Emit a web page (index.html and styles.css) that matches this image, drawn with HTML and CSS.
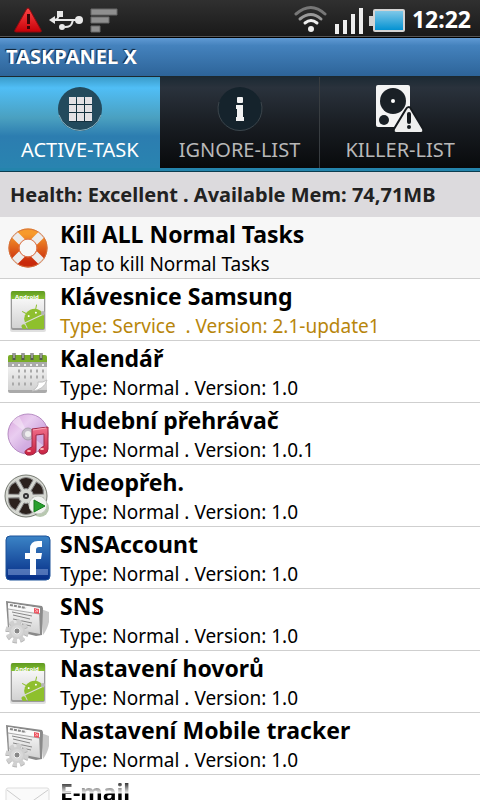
FILE: index.html
```html
<!DOCTYPE html>
<html lang="en">
<head>
    <meta charset="UTF-8">
    <meta name="viewport" content="width=device-width, initial-scale=1.0">
    <title>TaskPanel X</title>
    <link rel="stylesheet" href="styles.css">
</head>
<body>
    <!-- Shared icons -->
    <svg class="sprite" aria-hidden="true">
        <defs>
            <linearGradient id="g-orange" x1="0" y1="0" x2="0" y2="1"><stop offset="0" stop-color="#f79a2c"/><stop offset="1" stop-color="#c92a0c"/></linearGradient>
            <linearGradient id="g-paper" x1="0" y1="0" x2="0" y2="1"><stop offset="0" stop-color="#ffffff"/><stop offset="1" stop-color="#d2d2d2"/></linearGradient>
            <linearGradient id="g-green" x1="0" y1="0" x2="0" y2="1"><stop offset="0" stop-color="#5f9a20"/><stop offset="1" stop-color="#86bf34"/></linearGradient>
            <linearGradient id="g-disc" x1="0" y1="0" x2="1" y2="1"><stop offset="0" stop-color="#d9a3dc"/><stop offset=".35" stop-color="#e9cdf0"/><stop offset=".6" stop-color="#d3aee2"/><stop offset="1" stop-color="#c79bd4"/></linearGradient>
            <linearGradient id="g-note" x1="0" y1="0" x2="0" y2="1"><stop offset="0" stop-color="#f0708c"/><stop offset="1" stop-color="#c8203f"/></linearGradient>
            <linearGradient id="g-fb" x1="0" y1="0" x2="0" y2="1"><stop offset="0" stop-color="#3b84c6"/><stop offset="1" stop-color="#052c86"/></linearGradient>
            <clipPath id="page-clip"><path d="M8 6h32v37H8z"/></clipPath>
        </defs>
        <symbol id="icon-android" viewBox="0 0 48 48">
            <rect x="6" y="6" width="36" height="40" rx="2" fill="#000" opacity=".12"/>
            <rect x="7" y="5" width="34" height="39" rx="2" fill="#9a9a9a"/>
            <rect x="8" y="6" width="32" height="36" rx="1" fill="url(#g-paper)"/>
            <path d="M7 13V7q0-2 2-2h30q2 0 2 2v6z" fill="url(#g-green)"/>
            <g clip-path="url(#page-clip)">
                <g transform="rotate(-25 30 32)">
                    <path d="M20 32a10 9 0 0 1 20 0z" fill="#8fbf2f"/>
                    <path d="M25 25l-3-4M35 25l3-4" stroke="#8fbf2f"/>
                    <circle cx="26" cy="28" r="1" fill="#fff"/><circle cx="34" cy="28" r="1" fill="#fff"/>
                    <path d="M20 33h20v16H20z" fill="#8ec02c"/>
                    <rect x="15" y="33" width="4" height="12" rx="2" fill="#8fbf2f"/>
                </g>
            </g>
            <circle cx="39" cy="27" r="2" fill="#b5b5b5"/>
        </symbol>
        <symbol id="icon-settings" viewBox="0 0 48 48">
            <path d="M37 13l8 3v10q-2 8-6 13z" fill="#777" opacity=".4"/>
            <path d="M2 5l36 5 1 2-1 27-6 1-28-7z" fill="#8a8a8a"/>
            <path d="M4 7l31 5 1 26-31-6z" fill="url(#g-paper)"/>
            <path d="M4 7l32 5v5L4 12z" fill="#fafafa"/>
            <path d="M6 9l16 3" stroke="#888" stroke-width="2" stroke-dasharray="3 1"/>
            <path d="M4 13l31 5" stroke="#aaa"/>
            <path d="M8 16l20 4M9 19l17 4M9 23l19 4M18 28l9 2" stroke="#888" fill="none"/>
            <path d="M30 12l5 1v5l-5-1z" fill="#ed5561"/><path d="M31 13l3 3m0-2l-3 2" stroke="#f7a6ab"/>
            <circle cx="13" cy="36" r="9" fill="none" stroke="#b5b5b5" stroke-width="5" stroke-dasharray="4 3"/>
            <circle cx="13" cy="35" r="9" fill="none" stroke="#d0d0d0" stroke-width="5" stroke-dasharray="4 3"/>
            <circle cx="13" cy="35" r="7" fill="#d8d8d8" stroke="#cfcfcf" stroke-width="2"/>
            <circle cx="13" cy="35" r="3" fill="#888" stroke="#f0f0f0"/>
        </symbol>
    </svg>

    <div class="phone">
        <!-- Status bar -->
        <header class="status-bar">
            <svg class="status-left" width="112" height="30" viewBox="0 0 112 30" aria-hidden="true">
                <defs><linearGradient id="g-red" x1="0" y1="0" x2="0" y2="1"><stop offset="0" stop-color="#ff4545"/><stop offset="1" stop-color="#c40008"/></linearGradient></defs>
                <path d="M28 3q1 0 2 2l11 20q1 2-1 2H16q-2 0-1-2L26 5q1-2 2-2z" fill="url(#g-red)" stroke="#8d0b10" stroke-width="1"/>
                <path d="M27 9h3v10h-3zM27 21h3v3h-3z" fill="#3a0608"/>
                <g fill="none" stroke="#e8e8e8" stroke-width="2"><path d="M53 15h26M65 22q6 0 7-4l1-3M55 15q3-1 4-4"/></g>
                <path d="M49 15l6-4v8z" fill="#e8e8e8"/><rect x="57" y="6" width="6" height="6" fill="#e8e8e8"/><circle cx="79" cy="15" r="4" fill="#e8e8e8"/><circle cx="62" cy="22" r="3" fill="#e8e8e8"/>
                <g fill="#8f8f8f" stroke="#666"><path d="M91 4h26v6H91z"/><path d="M91 12h18v6H91z"/><path d="M91 21h9v6h-9z"/></g>
            </svg>
            <svg class="status-right" width="112" height="30" viewBox="0 0 112 30" aria-hidden="true">
                <defs><linearGradient id="g-batt" x1="0" y1="0" x2="0" y2="1"><stop offset="0" stop-color="#7fc8e8"/><stop offset="1" stop-color="#0492d2"/></linearGradient></defs>
                <g fill="none" stroke-linecap="round" stroke-width="3"><path d="M3 10q15-13 29 0" stroke="#777"/><path d="M7 15q11-9 21 0" stroke="#999"/><path d="M12 19q6-5 12 0" stroke="#eee"/></g>
                <circle cx="18" cy="25" r="3" fill="#eee"/>
                <path d="M42 20h4v10h-4zM50 16h4v14h-4zM58 10h4v20h-4zM66 4h4v26h-4z" fill="#eee"/>
                <rect x="76" y="12" width="5" height="10" fill="#d4d4d4"/><rect x="80" y="5" width="32" height="23" rx="2" fill="#d4d4d4"/><rect x="82" y="7" width="28" height="19" fill="url(#g-batt)"/>
            </svg>
            <time class="clock" datetime="12:22">12:22</time>
        </header>

        <h1 class="app-title">TASKPANEL X</h1>

        <!-- Tabs -->
        <nav class="tabs" role="tablist">
            <button class="tab active" type="button" role="tab" aria-selected="true">
                <svg width="48" height="48" viewBox="0 0 48 48" aria-hidden="true">
                    <circle cx="24" cy="24" r="22" fill="#234a5d"/><path d="M3 30a22 22 0 0 0 42 0" fill="none" stroke="#8ab2c2"/>
                    <g fill="#14303e"><path d="M13 14h23v23H13z"/></g>
                    <path d="M13 12h7v7h-7zM21 12h7v7h-7zM29 12h7v7h-7zM13 20h7v7h-7zM21 20h7v7h-7zM29 20h7v7h-7zM13 28h7v8h-7zM21 28h7v8h-7zM29 28h7v8h-7z" fill="#e3e1e5"/>
                </svg>
                <span>ACTIVE-TASK</span>
            </button>
            <button class="tab" type="button" role="tab" aria-selected="false">
                <svg width="48" height="48" viewBox="0 0 48 48" aria-hidden="true">
                    <circle cx="24" cy="24" r="22" fill="#15232c"/><path d="M3 17a22 22 0 1 0 42 0" fill="none" stroke="#3c454b"/>
                    <path d="M21 13q0-1 1-1h4q1 0 1 1v4q0 1-1 1h-4q-1 0-1-1zM20 20h7v12h1v4h-8v-4h1v-8h-1z" fill="#f2f2f2"/>
                </svg>
                <span>IGNORE-LIST</span>
            </button>
            <button class="tab" type="button" role="tab" aria-selected="false">
                <svg width="48" height="48" viewBox="0 0 48 48" aria-hidden="true">
                    <path d="M2 0h30q2 0 2 2v21L20 42H2q-2 0-2-2V2q0-2 2-2z" fill="#f4f4f4"/>
                    <circle cx="17" cy="16" r="13" fill="#1a2026"/><circle cx="17" cy="16" r="2" fill="#fff"/><circle cx="8" cy="35" r="5" fill="#1a2026"/>
                    <path d="M33 22q1 0 2 2l12 20q1 4-2 4H20q-3 0-2-4l12-20q1-2 3-2z" fill="#eee" stroke="#15191d" stroke-width="2"/>
                    <path d="M33 29v8" stroke="#15191d" stroke-width="4" stroke-linecap="round"/><circle cx="33" cy="42" r="2" fill="#15191d"/>
                </svg>
                <span>KILLER-LIST</span>
            </button>
        </nav>

        <p class="health">Health: Excellent . Available Mem: 74,71MB</p>

        <!-- Task list -->
        <ul class="tasks">
            <li><button class="task kill-all" type="button">
                <svg class="task-icon" viewBox="0 0 48 48" aria-hidden="true">
                    <circle cx="24" cy="24" r="14" fill="none" stroke="url(#g-orange)" stroke-width="11"/>
                    <g stroke="#ececec" stroke-width="8"><path d="M10 10l8 8M38 10l-8 8M10 38l8-8M38 38l-8-8"/></g>
                    <circle cx="24" cy="24" r="19" fill="none" stroke="#d5743f" stroke-width="1"/><circle cx="24" cy="24" r="9" fill="none" stroke="#dd7a55" stroke-width="1"/>
                </svg>
                <span class="name">Kill ALL Normal Tasks</span>
                <span class="info">Tap to kill Normal Tasks</span>
            </button></li>
            <li><button class="task" type="button">
                <svg class="task-icon" viewBox="0 0 48 48" aria-hidden="true"><use href="#icon-android"/><text x="11" y="13" class="icon-label">Android</text></svg>
                <span class="name">Klávesnice Samsung</span>
                <span class="info service">Type: Service&nbsp; . Version: 2.1-update1</span>
            </button></li>
            <li><button class="task" type="button">
                <svg class="task-icon" viewBox="0 0 48 48" aria-hidden="true">
                    <rect x="4" y="8" width="39" height="37" rx="2" fill="#aaa"/><rect x="4" y="8" width="39" height="34" fill="url(#g-paper)"/>
                    <path d="M4 14V9q0-2 2-2h35q2 0 2 2v5z" fill="#79ac27"/><path d="M4 14h39v5H4z" fill="#aaa"/>
                    <path d="M10 5v7M19 5v7M28 5v7M37 5v7" stroke="#555" stroke-width="3"/><path d="M10 5v5M19 5v5M28 5v5M37 5v5" stroke="#ddd"/>
                    <path d="M8 17h32" stroke="#eee" stroke-width="2" stroke-dasharray="2 4"/>
                    <path d="M14 23h26M8 29h32M8 36h23" stroke="#aaa" stroke-width="3" stroke-dasharray="2 4"/>
                    <path d="M43 32q-3 10-15 11 7-4 6-9 5 1 9-2z" fill="#fff" stroke="#c0c0c0"/>
                </svg>
                <span class="name">Kalendář</span>
                <span class="info">Type: Normal . Version: 1.0</span>
            </button></li>
            <li><button class="task" type="button">
                <svg class="task-icon" viewBox="0 0 48 48" aria-hidden="true">
                    <circle cx="24" cy="24" r="20" fill="url(#g-disc)" stroke="#b68cc3"/>
                    <path d="M24 24L8 12q3-4 7-6zM24 24l16 12q-3 4-7 6z" fill="#fff" opacity=".35"/>
                    <circle cx="24" cy="24" r="6" fill="#c4bdc9" stroke="#aaa2b0"/><circle cx="24" cy="24" r="3" fill="#eee"/>
                    <path d="M28 19l16-2v22q0 4-4 5t-5-2 5-6V24l-8 1v15q0 4-5 5t-6-2 7-6z" fill="url(#g-note)" stroke="#9e2947"/>
                    <path d="M29 20l13-2" stroke="#f9a6b6"/><ellipse cx="25" cy="41" rx="2" ry="1" fill="#fbb"/><ellipse cx="38" cy="39" rx="2" ry="1" fill="#fbb"/>
                </svg>
                <span class="name">Hudební přehrávač</span>
                <span class="info">Type: Normal . Version: 1.0.1</span>
            </button></li>
            <li><button class="task" type="button">
                <svg class="task-icon" viewBox="0 0 48 48" aria-hidden="true">
                    <circle cx="36" cy="36" r="9" fill="#b8c8b0"/><circle cx="22" cy="24" r="21" fill="#d5d7d1" stroke="#777b73"/>
                    <g fill="#2b211d" stroke="#888">
                        <path id="reel-hole" d="M20 17L15 8q7-5 14 0l-5 9q-2-1-4 0z"/>
                        <use href="#reel-hole" transform="rotate(60 22 24)"/><use href="#reel-hole" transform="rotate(120 22 24)"/>
                        <use href="#reel-hole" transform="rotate(180 22 24)"/><use href="#reel-hole" transform="rotate(240 22 24)"/><use href="#reel-hole" transform="rotate(300 22 24)"/>
                    </g>
                    <circle cx="22" cy="24" r="3" fill="#333"/><circle cx="22" cy="24" r="1" fill="#ddd"/>
                    <circle cx="34" cy="33" r="9" fill="#f0f2ef" stroke="#c3c8c0"/><path d="M30 28l11 6-11 6z" fill="#28a02d" stroke="#16791d"/>
                </svg>
                <span class="name">Videopřeh.</span>
                <span class="info">Type: Normal . Version: 1.0</span>
            </button></li>
            <li><button class="task" type="button">
                <svg class="task-icon" viewBox="0 0 48 48" aria-hidden="true">
                    <rect x="2" y="2" width="44" height="44" rx="4" fill="url(#g-fb)" stroke="#1c5299"/>
                    <path d="M4 35h40v6H4z" fill="#8fa9dd" opacity=".5"/>
                    <path d="M26 41V25h-5v-6h5v-4q0-8 8-8h4v6h-3q-3 0-3 3v3h6l-1 6h-5v16z" fill="#fff"/>
                </svg>
                <span class="name">SNSAccount</span>
                <span class="info">Type: Normal . Version: 1.0</span>
            </button></li>
            <li><button class="task" type="button">
                <svg class="task-icon" aria-hidden="true"><use href="#icon-settings"/></svg>
                <span class="name">SNS</span>
                <span class="info">Type: Normal . Version: 1.0</span>
            </button></li>
            <li><button class="task" type="button">
                <svg class="task-icon" viewBox="0 0 48 48" aria-hidden="true"><use href="#icon-android"/><text x="11" y="13" class="icon-label">Android</text></svg>
                <span class="name">Nastavení hovorů</span>
                <span class="info">Type: Normal . Version: 1.0</span>
            </button></li>
            <li><button class="task" type="button">
                <svg class="task-icon" aria-hidden="true"><use href="#icon-settings"/></svg>
                <span class="name">Nastavení Mobile tracker</span>
                <span class="info">Type: Normal . Version: 1.0</span>
            </button></li>
            <li><button class="task" type="button">
                <svg class="task-icon" viewBox="0 0 48 48" aria-hidden="true">
                    <rect x="2" y="6" width="43" height="36" rx="2" fill="#fafafa" stroke="#ddd"/>
                    <path d="M3 8l20 15L44 8" fill="none" stroke="#ccc"/><path d="M22 18h14l-14 5z" fill="#777"/>
                </svg>
                <span class="name fading">E-mail</span>
            </button></li>
        </ul>
    </div>
</body>
</html>
```
FILE: styles.css
```css
body {
    margin: 0;
    background: #fff;
    color: #000;
    font-family: "Noto Sans", "Open Sans", sans-serif;
}
button {
    border: 0;
    margin: 0;
    padding: 0;
    font: inherit;
    color: inherit;
    cursor: pointer;
}
svg {
    display: block;
}
.sprite {
    position: absolute;
    width: 0;
    height: 0;
}
.phone {
    display: flex;
    flex-direction: column;
    height: 100vh;
    overflow: hidden;
}
.phone > * {
    flex-shrink: 0;
}

/* Status bar */
.status-bar {
    display: flex;
    align-items: center;
    box-sizing: border-box;
    height: 38px;
    padding-right: 9px;
    background: linear-gradient(#303030, #191919);
    border-bottom: 1px solid #000;
    box-shadow: inset 0 -1px #555;
}
.status-left {
    overflow: visible;
    margin-top: 2px;
}
.status-right {
    margin-left: auto;
    margin-right: 7px;
}
.clock {
    color: #fff;
    font-size: 23px;
    font-weight: bold;
    line-height: 36px;
}

.app-title {
    margin: 0;
    padding: 0 6px;
    height: 38px;
    background: linear-gradient(#609ad4, #4482bd 20%, #2d6499);
    border-bottom: 1px solid #1c2930;
    color: #fff;
    font-size: 20px;
    line-height: 37px;
    text-shadow: -1px -1px 1px #123;
}

/* Tabs */
.tabs {
    display: flex;
    background: #2484ac;
    border-bottom: 1px solid #0c3d50;
}
.tab {
    flex: 1;
    display: flex;
    flex-direction: column;
    align-items: center;
    height: 91px;
    margin-bottom: 3px;
    padding-top: 8px;
    box-sizing: border-box;
    background: linear-gradient(#1c2a34, #2a323c 12%, #181c21 55%, #080a0c);
    color: #b8b8b8;
    font-size: 20px;
    line-height: 34px;
}
.tab + .tab + .tab {
    border-left: 1px solid #383d41;
}
.tab.active {
    background: linear-gradient(#3a9bc9, #50bef6 12%, #4aa0c0 45%, #2c7db0 65%, #2984b0);
    color: #fff;
}

.health {
    margin: 0;
    padding: 0 10px;
    background: #dcdadd;
    color: #222;
    font-size: 20px;
    font-weight: bold;
    line-height: 45px;
}

/* Task list */
.tasks {
    margin: 0;
    padding: 0;
    list-style: none;
}
.task {
    display: grid;
    grid-template-columns: 48px 1fr;
    grid-template-rows: 34px 27px;
    column-gap: 8px;
    width: 100%;
    padding-left: 4px;
    background: #fff;
    border-bottom: 1px solid #cfcfcf;
    text-align: left;
    white-space: nowrap;
}
.task.kill-all {
    background: #f7f7f7;
}
.task-icon {
    grid-row: 1 / 3;
    align-self: center;
    width: 48px;
    height: 48px;
}
.icon-label {
    fill: #fff;
    font-size: 6px;
    font-weight: bold;
}
.name {
    font-size: 23px;
    font-weight: bold;
    line-height: 34px;
}
.name.fading {
    background: linear-gradient(#333 8px, #eee 18px, #000 19px);
    -webkit-background-clip: text;
    background-clip: text;
    color: transparent;
}
.info {
    font-size: 19px;
    line-height: 27px;
}
.info.service {
    color: #b8860b;
}
```
